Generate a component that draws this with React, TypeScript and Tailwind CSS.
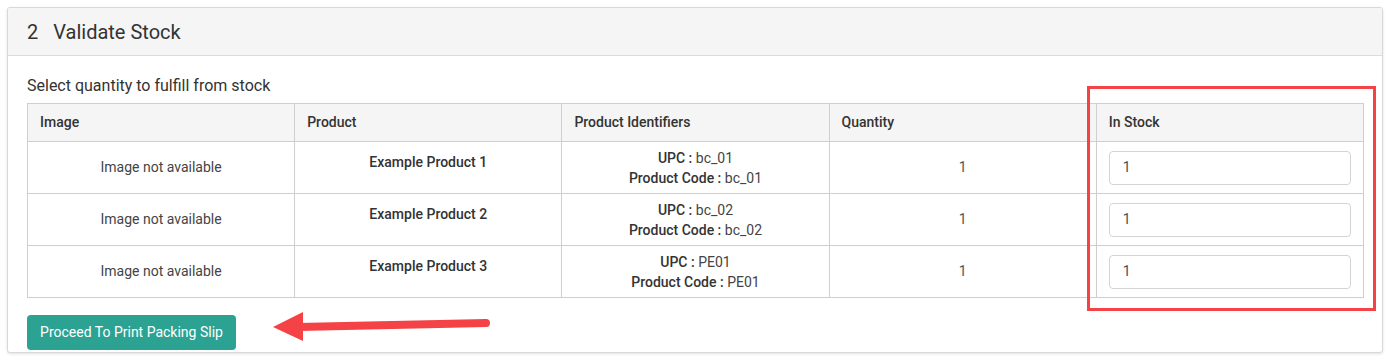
import React from "react";

const rows = [
  { name: "Example Product 1", upc: "bc_01", code: "bc_01" },
  { name: "Example Product 2", upc: "bc_02", code: "bc_02" },
  { name: "Example Product 3", upc: "PE01", code: "PE01" },
];

export default function App() {
  return (
    <div
      className="relative w-[1388px] h-[361px] bg-white pl-[7px] pt-[7px] text-[#333]"
      style={{ fontFamily: "Roboto, 'Liberation Sans', sans-serif" }}
    >
      <div className="w-[1376px] h-[346px] border border-[#d9d9d9] rounded-[3px] shadow-[0_1px_3px_rgba(0,0,0,0.12)] bg-white overflow-hidden">
        <div className="h-[48px] bg-[#f5f5f5] border-b border-[#dcdcdc] flex items-center pl-[19px] text-[20px] text-[#333]">
          <span>2</span>
          <span className="ml-[15px]">Validate Stock</span>
        </div>
        <div className="pl-[19px] pr-[18px] pt-[20px]">
          <div className="text-[16px] leading-[19px] mb-[8px] text-[#333]">Select quantity to fulfill from stock</div>
          <table className="w-full table-fixed border-collapse border border-[#cfcfcf] text-[14px]">
            <thead>
              <tr className="h-[38px] bg-[#f5f5f5]">
                {["Image", "Product", "Product Identifiers", "Quantity", "In Stock"].map((h) => (
                  <th key={h} className="border border-[#cfcfcf] text-left font-medium px-[12px] text-[#333]">
                    {h}
                  </th>
                ))}
              </tr>
            </thead>
            <tbody>
              {rows.map((r) => (
                <tr key={r.name} className="h-[52px]">
                  <td className="border border-[#cfcfcf] text-center text-[#444]">Image not available</td>
                  <td className="border border-[#cfcfcf] text-center font-medium pb-[10px] text-[#333]">{r.name}</td>
                  <td className="border border-[#cfcfcf] text-center leading-[20px] text-[#444]">
                    <div>
                      <span className="font-medium text-[#333]">UPC :</span> {r.upc}
                    </div>
                    <div>
                      <span className="font-medium text-[#333]">Product Code :</span> {r.code}
                    </div>
                  </td>
                  <td className="border border-[#cfcfcf] text-center text-[#555]">1</td>
                  <td className="border border-[#cfcfcf] px-[12px]">
                    <div className="h-[34px] border border-[#d4d4d4] rounded-[4px] flex items-center px-[13px] text-[#495057] text-[14px]">
                      1
                    </div>
                  </td>
                </tr>
              ))}
            </tbody>
          </table>
          <button className="mt-[17px] h-[35px] w-[209px] rounded-[4px] bg-[#2ba292] text-white text-[14px] font-normal">
            Proceed To Print Packing Slip
          </button>
        </div>
      </div>

      <div className="absolute left-[1087px] top-[86px] w-[289px] h-[225px] border-[3px] border-[#f44246]" />

      <svg className="absolute left-[268px] top-[308px]" width="230" height="40" viewBox="0 0 230 40">
        <line x1="30" y1="19" x2="218" y2="15" stroke="#f44246" strokeWidth="8" strokeLinecap="round" />
        <polygon points="5,19 35,4 35,33" fill="#f44246" />
      </svg>
    </div>
  );
}
